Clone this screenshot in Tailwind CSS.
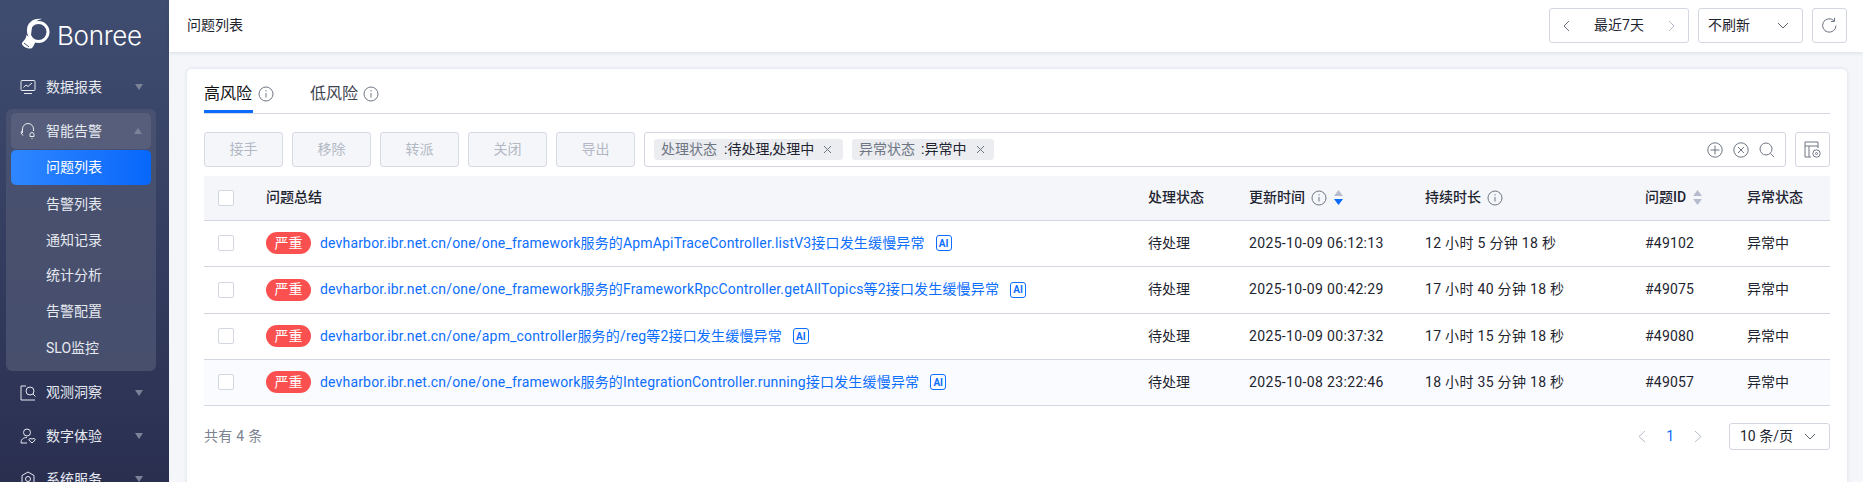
<!DOCTYPE html>
<html><head><meta charset="utf-8"><script src="https://cdn.jsdelivr.net/npm/@tailwindcss/browser@4"></script></head>
<body class="m-0 h-[482px] w-[1863px] overflow-hidden bg-[#f4f6fa] font-['Roboto','Noto_Sans_CJK_SC',sans-serif] text-[14px] text-[#1e2430]">
<div class="flex h-[482px]">
<aside class="h-[482px] w-[169px] shrink-0 overflow-hidden bg-gradient-to-b from-[#3f4d71] to-[#2a2f50] text-[#e6e9f0]">
  <div class="flex h-[66px] items-start pl-[20px] pt-[18px]">
    <svg width="35" height="32" viewBox="0 0 35 32" fill="none"><circle cx="18.500" cy="14" r="9.500" stroke="#fff" stroke-width="3"/><path d="M7 12C7 5 13 0 22 1c-5 1-9 4-10 8l-1 8c-1 3-4 1-4-5z" fill="#fff"/><path d="M6 17c1 3-2 5-4 8-1 3 7 7 10 5 2-2 2-4 3-5 1-2 1-3-2-4z" fill="#fff"/><path d="M4 25l5 4" stroke="#3f4d71" stroke-width="1"/></svg>
    <span class="ml-[2px] mt-[6px] font-['Inter',sans-serif] text-[26px] font-light leading-[24px] tracking-[-0.3px] text-white">Bonree</span>
  </div>
  <div class="flex h-[43px] items-center pl-[20px] pr-[26px] pb-[1px]">
    <svg class="h-[16px] w-[16px]" viewBox="0 0 16 16" fill="none" stroke="#e6e9f0" stroke-width="1"><rect x="1" y="1.500" width="14" height="10" rx="1"/><path d="M3.500 8.500l2.500-2.500 2 1.500 4-3.500M4 14.500h8"/></svg>
    <span class="ml-[10px] flex-1">数据报表</span>
    <span class="h-0 w-0 border-x-[4.5px] border-t-[6px] border-x-transparent border-t-[#7c8398]"></span>
  </div>
  <div class="ml-[6px] mr-[13px] h-[262px] rounded-[6px] bg-[#4a5270]/90 px-[5px] pt-[4px]">
    <div class="flex h-[36px] items-center rounded-[5px] bg-[#565e7b] pl-[9px] pr-[9px]">
      <svg class="h-[18px] w-[16px]" viewBox="0 0 16 18" fill="none" stroke="#e6e9f0" stroke-width="1"><path d="M2.500 11V7a5.500 5.500 0 0 1 11 0v2M2.500 8L1 11l2 2.500"/><path d="M10 12.500a2 2 0 0 1 4 0v2h-4zM11.500 16.500h1"/></svg>
      <span class="ml-[10px] flex-1">智能告警</span>
      <span class="h-0 w-0 border-x-[4.5px] border-b-[6px] border-x-transparent border-b-[#7c8398]"></span>
    </div>
    <div class="mt-[1px] flex h-[35px] items-center rounded-[5px] bg-gradient-to-r from-[#2e86ff] to-[#0667fb] pl-[35px] text-white">问题列表</div>
    <div class="mt-[1px] flex h-[36px] items-center pl-[35px]">告警列表</div>
    <div class="flex h-[36px] items-center pl-[35px]">通知记录</div>
    <div class="flex h-[35px] items-center pl-[35px]">统计分析</div>
    <div class="flex h-[36px] items-center pl-[35px]">告警配置</div>
    <div class="flex h-[38px] items-center pl-[35px]">SLO监控</div>
  </div>
  <div class="flex h-[43px] items-center pl-[20px] pr-[26px]">
    <svg class="h-[16px] w-[16px]" viewBox="0 0 16 16" fill="none" stroke="#e6e9f0" stroke-width="1"><path d="M6 1H1v14h14"/><circle cx="10" cy="6" r="4"/><path d="M13 9l2.500 2.500"/></svg>
    <span class="ml-[10px] flex-1">观测洞察</span>
    <span class="h-0 w-0 border-x-[4.5px] border-t-[6px] border-x-transparent border-t-[#7c8398]"></span>
  </div>
  <div class="flex h-[44px] items-center pl-[20px] pr-[26px]">
    <svg class="h-[16px] w-[16px]" viewBox="0 0 16 16" fill="none" stroke="#e6e9f0" stroke-width="1"><circle cx="7" cy="4.500" r="3.500"/><path d="M1 15c0-3.500 2-5.500 6-5.500M7 15H1"/><path d="M12 15l-3-2.800c-.8-1.200 1.500-2.600 3-1 1.500-1.600 3.800-.2 3 1z"/></svg>
    <span class="ml-[10px] flex-1">数字体验</span>
    <span class="h-0 w-0 border-x-[4.5px] border-t-[6px] border-x-transparent border-t-[#7c8398]"></span>
  </div>
  <div class="flex h-[42px] items-center pl-[20px] pr-[26px]">
    <svg class="h-[16px] w-[16px]" viewBox="0 0 16 16" fill="none" stroke="#e6e9f0" stroke-width="1"><path d="M8 1l6 3.500v7L8 15l-6-3.500v-7z"/><circle cx="8" cy="8" r="2.500"/></svg>
    <span class="ml-[10px] flex-1">系统服务</span>
    <span class="h-0 w-0 border-x-[4.5px] border-t-[6px] border-x-transparent border-t-[#7c8398]"></span>
  </div>
</aside>
<main class="min-w-0 flex-1">
  <header class="flex h-[52px] items-center bg-white pb-[1px] pl-[18px] pr-[16px] shadow-[0_1px_4px_rgba(30,40,80,0.12)]">
    <span class="flex-1">问题列表</span>
    <div class="flex h-[35px] w-[140px] items-center justify-between rounded-[3px] border border-[#d3d7e2] px-[12px]">
      <svg width="8" height="12" viewBox="0 0 8 12" fill="none" stroke="#6b7280"><path d="M7 1L2 6l5 5"/></svg><span>最近7天</span><svg width="8" height="12" viewBox="0 0 8 12" fill="none" stroke="#b6bccb"><path d="M1 1l5 5-5 5"/></svg>
    </div>
    <div class="ml-[9px] flex h-[35px] w-[105px] items-center justify-between rounded-[3px] border border-[#d3d7e2] pl-[9px] pr-[13px]">
      <span>不刷新</span><svg width="12" height="7" viewBox="0 0 12 7" fill="none" stroke="#5b6270"><path d="M1 1l5 5 5-5"/></svg>
    </div>
    <div class="ml-[9px] flex h-[35px] w-[35px] items-center justify-center rounded-[3px] border border-[#d3d7e2]">
      <svg width="17" height="17" viewBox="0 0 17 17" fill="none" stroke="#6b7280"><path d="M15 8.500a6.700 6.700 0 1 1-2.200-5"/><path d="M13.500 1v3.500H10"/></svg>
    </div>
  </header>
  <section class="ml-[18px] mr-[16px] mt-[17px] h-[420px] rounded-[5px] bg-white px-[17px] pt-[11px] shadow-[0_0_4px_rgba(30,40,80,0.12)]">
    <div class="flex h-[34px] items-start border-b border-[#d7dae4]">
      <div class="h-[33px] w-[49px] shrink-0 border-b-[3px] border-[#0b6bfa] pt-[2px] text-[16px] leading-[24px] text-[#111] whitespace-nowrap">高风险</div>
      <svg class="ml-[5px] mt-[6px]" width="16" height="16" viewBox="0 0 16 16" fill="none" stroke="#6f7683"><circle cx="8" cy="8" r="7"/><path d="M8 7v4.500M8 4.200v1.300"/></svg>
      <span class="ml-[36px] pt-[2px] text-[16px] leading-[24px] text-[#3d4350]">低风险</span>
      <svg class="ml-[5px] mt-[6px]" width="16" height="16" viewBox="0 0 16 16" fill="none" stroke="#6f7683"><circle cx="8" cy="8" r="7"/><path d="M8 7v4.500M8 4.200v1.300"/></svg>
    </div>
    <div class="mt-[18px] flex h-[35px] gap-[9px]">
      <button class="h-[35px] w-[79px] rounded-[3px] border border-[#d7dae4] bg-[#f4f6fa] text-[#b3b8c4]">接手</button>
      <button class="h-[35px] w-[79px] rounded-[3px] border border-[#d7dae4] bg-[#f4f6fa] text-[#b3b8c4]">移除</button>
      <button class="h-[35px] w-[79px] rounded-[3px] border border-[#d7dae4] bg-[#f4f6fa] text-[#b3b8c4]">转派</button>
      <button class="h-[35px] w-[79px] rounded-[3px] border border-[#d7dae4] bg-[#f4f6fa] text-[#b3b8c4]">关闭</button>
      <button class="h-[35px] w-[79px] rounded-[3px] border border-[#d7dae4] bg-[#f4f6fa] text-[#b3b8c4]">导出</button>
      <div class="flex h-[35px] flex-1 items-center gap-[9px] rounded-[3px] border border-[#d3d7e2] pl-[9px] pr-[10px]">
        <span class="flex h-[21px] w-[189px] items-center rounded-[3px] bg-[#ebedf1] pl-[7px] text-[#6f7683]">处理状态<span class="ml-[7px] text-[#1e2430]">:待处理,处理中</span><svg class="ml-[9px]" width="9" height="9" viewBox="0 0 9 9" stroke="#6f7683"><path d="M1 1l7 7M8 1L1 8"/></svg></span>
        <span class="flex h-[21px] w-[142px] items-center rounded-[3px] bg-[#ebedf1] pl-[7px] text-[#6f7683]">异常状态<span class="ml-[6px] text-[#1e2430]">:异常中</span><svg class="ml-[10px]" width="9" height="9" viewBox="0 0 9 9" stroke="#6f7683"><path d="M1 1l7 7M8 1L1 8"/></svg></span>
        <span class="flex-1"></span>
        <svg width="16" height="16" viewBox="0 0 16 16" fill="none" stroke="#6f7683"><circle cx="8" cy="8" r="7.200"/><path d="M8 3.500v9M3.500 8h9"/></svg>
        <svg class="ml-[1px]" width="16" height="16" viewBox="0 0 16 16" fill="none" stroke="#6f7683"><circle cx="8" cy="8" r="7.200"/><path d="M5 5l6 6M11 5l-6 6"/></svg>
        <svg class="ml-[1px]" width="16" height="16" viewBox="0 0 16 16" fill="none" stroke="#6f7683"><circle cx="7" cy="7" r="6"/><path d="M11.500 11.500l3.500 3.500"/></svg>
      </div>
      <div class="flex h-[35px] w-[35px] items-center justify-center rounded-[3px] border border-[#d3d7e2]">
        <svg width="17" height="17" viewBox="0 0 17 17" fill="none" stroke="#6f7683"><path d="M14 7V1H1v15h6M1 5h13M5 5v11"/><circle cx="12.500" cy="12.500" r="3.700"/><circle cx="12.500" cy="12.500" r="1"/></svg>
      </div>
    </div>
    <table class="mt-[9px] w-full table-fixed border-collapse">
      <colgroup><col class="w-[62px]"><col><col class="w-[101px]"><col class="w-[176px]"><col class="w-[220px]"><col class="w-[102px]"><col class="w-[83px]"></colgroup>
      <thead><tr class="h-[44px] border-b border-[#d3d7e2] bg-[#f4f6fa] text-left">
        <th class="pl-[14px] font-medium"><span class="block h-[16px] w-[16px] rounded-[2px] border border-[#d3d7e2] bg-white"></span></th>
        <th class="font-medium">问题总结</th><th class="font-medium">处理状态</th>
        <th class="font-medium"><span class="flex items-center">更新时间<svg class="ml-[6px]" width="16" height="16" viewBox="0 0 16 16" fill="none" stroke="#6f7683"><circle cx="8" cy="8" r="7"/><path d="M8 7v4.500M8 4.200v1.300"/></svg><svg class="ml-[7px]" width="9" height="15" viewBox="0 0 9 15"><path d="M4.500 0L9 6H0z" fill="#b6bccb"/><path d="M4.500 15L0 9h9z" fill="#0b6bfa"/></svg></span></th>
        <th class="font-medium"><span class="flex items-center">持续时长<svg class="ml-[6px]" width="16" height="16" viewBox="0 0 16 16" fill="none" stroke="#6f7683"><circle cx="8" cy="8" r="7"/><path d="M8 7v4.500M8 4.200v1.300"/></svg></span></th>
        <th class="font-medium"><span class="flex items-center">问题ID<svg class="ml-[7px]" width="9" height="15" viewBox="0 0 9 15"><path d="M4.500 0L9 6H0z" fill="#b6bccb"/><path d="M4.500 15L0 9h9z" fill="#b6bccb"/></svg></span></th>
        <th class="font-medium">异常状态</th>
      </tr></thead>
      <tbody>
        <tr class="h-[46px] border-b border-[#d3d7e2]">
          <td class="pl-[14px]"><span class="block h-[16px] w-[16px] rounded-[2px] border border-[#d3d7e2] bg-white"></span></td>
          <td><span class="flex items-center"><span class="flex h-[22px] w-[45px] items-center justify-center rounded-full bg-[#fb5050] text-white">严重</span><span class="ml-[9px] tracking-[0.17px] text-[#0d6efd]">devharbor.ibr.net.cn/one/one_framework服务的ApmApiTraceController.listV3接口发生缓慢异常</span><span class="ml-[11px] flex h-[16px] w-[16px] items-center justify-center rounded-[3px] border border-[#0d6efd] text-[10px] font-bold text-[#0d6efd]">AI</span></span></td>
          <td>待处理</td><td class="tracking-[0.35px]">2025-10-09 06:12:13</td><td class="tracking-[0.3px]">12 小时 5 分钟 18 秒</td><td class="tracking-[0.2px]">#49102</td><td>异常中</td>
        </tr>
        <tr class="h-[47px] border-b border-[#d3d7e2]">
          <td class="pl-[14px]"><span class="block h-[16px] w-[16px] rounded-[2px] border border-[#d3d7e2] bg-white"></span></td>
          <td><span class="flex items-center"><span class="flex h-[22px] w-[45px] items-center justify-center rounded-full bg-[#fb5050] text-white">严重</span><span class="ml-[9px] tracking-[0.17px] text-[#0d6efd]">devharbor.ibr.net.cn/one/one_framework服务的FrameworkRpcController.getAllTopics等2接口发生缓慢异常</span><span class="ml-[11px] flex h-[16px] w-[16px] items-center justify-center rounded-[3px] border border-[#0d6efd] text-[10px] font-bold text-[#0d6efd]">AI</span></span></td>
          <td>待处理</td><td class="tracking-[0.35px]">2025-10-09 00:42:29</td><td class="tracking-[0.3px]">17 小时 40 分钟 18 秒</td><td class="tracking-[0.2px]">#49075</td><td>异常中</td>
        </tr>
        <tr class="h-[46px] border-b border-[#d3d7e2]">
          <td class="pl-[14px]"><span class="block h-[16px] w-[16px] rounded-[2px] border border-[#d3d7e2] bg-white"></span></td>
          <td><span class="flex items-center"><span class="flex h-[22px] w-[45px] items-center justify-center rounded-full bg-[#fb5050] text-white">严重</span><span class="ml-[9px] tracking-[0.17px] text-[#0d6efd]">devharbor.ibr.net.cn/one/apm_controller服务的/reg等2接口发生缓慢异常</span><span class="ml-[11px] flex h-[16px] w-[16px] items-center justify-center rounded-[3px] border border-[#0d6efd] text-[10px] font-bold text-[#0d6efd]">AI</span></span></td>
          <td>待处理</td><td class="tracking-[0.35px]">2025-10-09 00:37:32</td><td class="tracking-[0.3px]">17 小时 15 分钟 18 秒</td><td class="tracking-[0.2px]">#49080</td><td>异常中</td>
        </tr>
        <tr class="h-[46px] border-b border-[#d3d7e2] bg-[#fafbfe]">
          <td class="pl-[14px]"><span class="block h-[16px] w-[16px] rounded-[2px] border border-[#d3d7e2] bg-white"></span></td>
          <td><span class="flex items-center"><span class="flex h-[22px] w-[45px] items-center justify-center rounded-full bg-[#fb5050] text-white">严重</span><span class="ml-[9px] tracking-[0.17px] text-[#0d6efd]">devharbor.ibr.net.cn/one/one_framework服务的IntegrationController.running接口发生缓慢异常</span><span class="ml-[11px] flex h-[16px] w-[16px] items-center justify-center rounded-[3px] border border-[#0d6efd] text-[10px] font-bold text-[#0d6efd]">AI</span></span></td>
          <td>待处理</td><td class="tracking-[0.35px]">2025-10-08 23:22:46</td><td class="tracking-[0.3px]">18 小时 35 分钟 18 秒</td><td class="tracking-[0.2px]">#49057</td><td>异常中</td>
        </tr>
      </tbody>
    </table>
    <div class="mt-[17px] flex h-[27px] items-center">
      <span class="flex-1 tracking-[0.3px] text-[#7b8290]">共有 4 条</span>
      <svg width="9" height="13" viewBox="0 0 9 13" fill="none" stroke="#b6bccb"><path d="M8 1L2 6.500 8 12"/></svg>
      <span class="ml-[20px] text-[#0b6bfa]">1</span>
      <svg class="ml-[20px]" width="9" height="13" viewBox="0 0 9 13" fill="none" stroke="#b6bccb"><path d="M1 1l6 5.500L1 12"/></svg>
      <div class="ml-[26px] flex h-[27px] w-[101px] items-center justify-between rounded-[3px] border border-[#d3d7e2] pl-[10px] pr-[13px]"><span>10 条/页</span><svg width="12" height="7" viewBox="0 0 12 7" fill="none" stroke="#5b6270"><path d="M1 1l5 5 5-5"/></svg></div>
    </div>
  </section>
</main>
</div>
</body></html>
